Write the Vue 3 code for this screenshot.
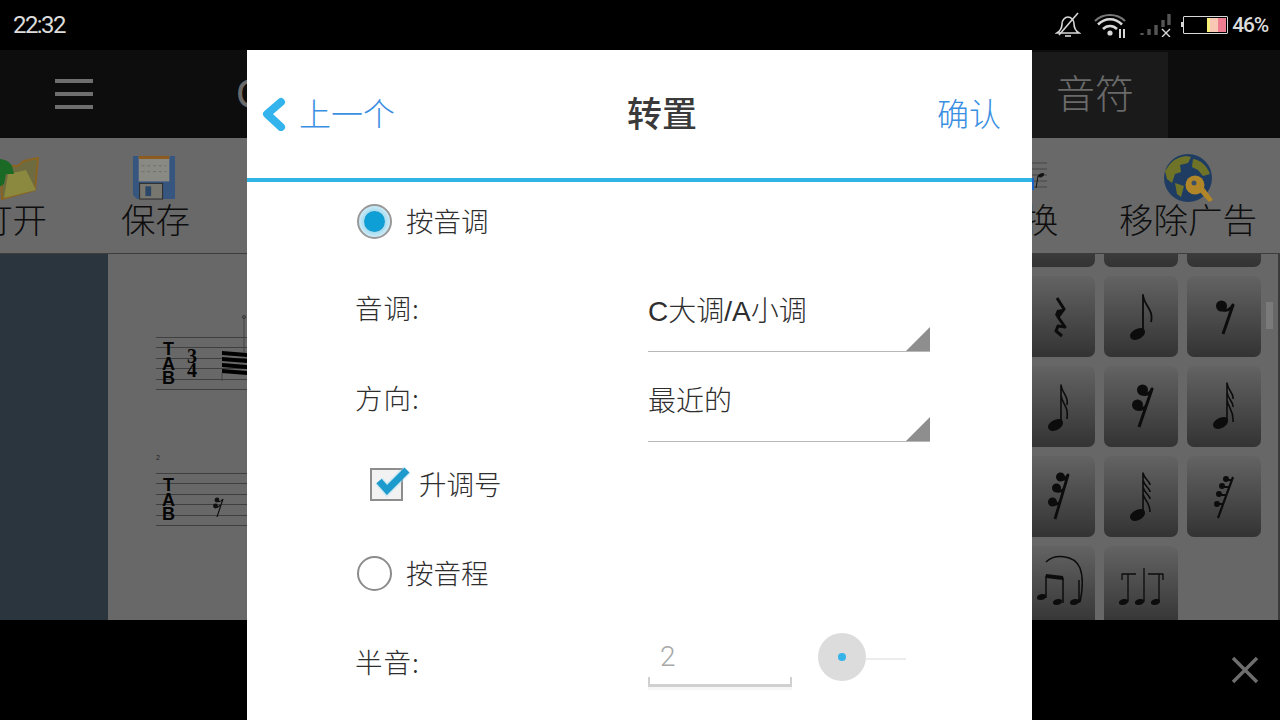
<script setup>
// note shapes for the palette, drawn in a 74x81 button box
const palette = [
  { id: 'r4', weight: 3, stroke: 'M36 22l7 11-6 8 7 10-7-1-2 5 6 5', fill: 'M36 34l6-1-5 9-3-3z' },
  { id: 'n8', weight: 1.8, stroke: 'M39 54V19c1 11 11 14 8 27', fill: 'M26 60c0-4 6-8 11-8 3 0 4 2 4 4 0 4-6 8-10 8-3 0-5-2-5-4z' },
  { id: 'r8', weight: 3, stroke: 'M36 34c4 1 8-1 10-5L36 58', fill: 'M29 30a5.5 5.5 0 1 0 11 0a5.5 5.5 0 1 0-11 0z' },
  { id: 'n16', weight: 1.6, stroke: 'M40 57V19c1 9 8 11 6 20M40 29c1 9 8 11 6 24', fill: 'M27 61c0-4 6-8 11-8 3 0 4 2 4 4 0 4-6 8-10 8-3 0-5-2-5-4z' },
  { id: 'r16', weight: 3, stroke: 'M38 28c4 1 8 0 10-5L35 61M33 43c4 1 7 0 9-3', fill: 'M33 24a5.5 5.5 0 1 0 11 0a5.5 5.5 0 1 0-11 0zM28 39a5.5 5.5 0 1 0 11 0a5.5 5.5 0 1 0-11 0z' },
  { id: 'n32', weight: 1.6, stroke: 'M40 55V17c1 8 7 10 6 16M40 26c1 8 7 10 6 15M40 34c1 8 7 10 6 22', fill: 'M26 59c0-4 6-8 11-8 3 0 4 2 4 4 0 4-6 8-10 8-3 0-5-2-5-4z' },
  { id: 'r32', weight: 2.8, stroke: 'M39 23c3 1 6 0 8-4L34 63M36 35c3 1 5 0 7-2M32 48c3 1 5 0 7-2', fill: 'M35 21a4.5 4.5 0 1 0 9 0a4.5 4.5 0 1 0-9 0zM31 32a4.5 4.5 0 1 0 9 0a4.5 4.5 0 1 0-9 0zM27 46a4.5 4.5 0 1 0 9 0a4.5 4.5 0 1 0-9 0z' },
  { id: 'n64', weight: 1.6, stroke: 'M39 57V17c1 6 7 8 7 12M39 24c1 6 7 8 7 12M39 31c1 6 7 8 7 12M39 38c1 6 7 8 7 18', fill: 'M26 61c0-4 6-8 11-8 3 0 4 2 4 4 0 4-6 8-10 8-3 0-5-2-5-4z' },
  { id: 'r64', weight: 2.2, stroke: 'M46 21L31 62M38 24h7M35 31h7M32 39h7M30 48h7', fill: 'M36 23a3 3 0 1 0 6 0a3 3 0 1 0-6 0zM32 30a3 3 0 1 0 6 0a3 3 0 1 0-6 0zM29 38a3 3 0 1 0 6 0a3 3 0 1 0-6 0zM27 48a3 3 0 1 0 6 0a3 3 0 1 0-6 0z' },
  { id: 'tuplet', weight: 1.5, stroke: 'M25 52V30l17 2v25M58 57V34M25 16c8-8 28-8 34 6 3 8 3 20 0 34', fill: 'M16 52c0-3 3-4 6-4 2 0 3 1 3 2 0 3-3 4-6 4-2 0-3-1-3-2zM32 57c0-3 3-4 6-4 2 0 3 1 3 2 0 3-3 4-6 4-2 0-3-1-3-2zM49 57c0-3 3-4 6-4 2 0 3 1 3 2 0 3-3 4-6 4-2 0-3-1-3-2zM25 28l17 2v4l-17-2z' },
  { id: 'tuplet2', weight: 1.3, stroke: 'M24 56V28M40 56V28M55 56V28M18 34v-6h14M44 28h15v6M40 22v8', fill: 'M15 57c0-3 3-4 6-4 2 0 3 1 3 2 0 3-3 4-6 4-2 0-3-1-3-2zM31 57c0-3 3-4 6-4 2 0 3 1 3 2 0 3-3 4-6 4-2 0-3-1-3-2zM47 57c0-3 3-4 6-4 2 0 3 1 3 2 0 3-3 4-6 4-2 0-3-1-3-2z' },
]
</script>

<template>
  <div class="screen">
    <div class="status-bar">
      <span class="clock">22:32</span>
      <div class="status-icons">
        <svg class="ic-bell" width="26" height="26" viewBox="0 0 26 26" fill="none" stroke="#d8d8d8" stroke-width="1.6">
          <path d="M2 21c3-2 5-4 5-9 0-4 3-7 6-7s6 3 6 7c0 5 2 7 5 9z" />
          <path d="M10 24h6" />
          <path d="M4 23L23 1" />
        </svg>
        <svg class="ic-wifi" width="33" height="26" viewBox="0 0 33 26" fill="none" stroke="#d8d8d8">
          <path d="M1 9c8-8 22-8 30 0" stroke-width="2.2" stroke="#777" />
          <path d="M4 12.5c7-7 17-7 24 0" stroke-width="2.6" />
          <path d="M9 17c4-4 10-4 14 0" stroke-width="2.6" />
          <circle cx="16" cy="21" r="2.6" fill="#d8d8d8" stroke="none" />
          <path d="M26 17v9M30 17v9" stroke-width="2" />
        </svg>
        <svg class="ic-signal" width="32" height="24" viewBox="0 0 32 24" stroke="#555" stroke-width="3.4">
          <path d="M3 22v-2M10 22v-6M17 22v-10M24 14V7M30 12V1" />
          <path d="M23 16l8 8M31 16l-8 8" stroke="#d8d8d8" stroke-width="1.4" />
        </svg>
        <div class="battery">
          <span class="battery-fill yellow"></span>
          <span class="battery-fill peach"></span>
          <span class="battery-fill pink"></span>
        </div>
        <span class="percent">46%</span>
      </div>
    </div>

    <div class="app-bar">
      <div class="menu-btn">
        <span></span><span></span><span></span>
      </div>
      <span class="app-title">C</span>
      <div class="app-tab">音符</div>
    </div>

    <div class="toolbar">
      <div class="tool">
        <svg width="46" height="46" viewBox="0 0 46 46">
          <path d="M10 12H28L34 7 48 4 45 36 12 45z" fill="#6e6b40" stroke="#8a6420" stroke-width="2" />
          <path d="M18 20L36 16 46 36 14 44z" fill="#8b8840" />
          <path d="M-2 10C4 2 18 4 22 12L24 20H16L14 30 4 36-2 30z" fill="#1a6a25" />
        </svg>
        <span>打开</span>
      </div>
      <div class="tool">
        <svg class="floppy" width="44" height="45" viewBox="0 0 46 46" preserveAspectRatio="none">
          <path d="M1 1h44v44H5l-4-4z" fill="#37567f" />
          <rect x="7" y="1" width="32" height="26" fill="#8a8a84" />
          <rect x="7" y="1" width="32" height="3" fill="#8f5a1e" />
          <path d="M10 11h26M10 17h26" stroke="#6e6e6a" stroke-dasharray="3 3" />
          <rect x="8" y="29" width="24" height="16" fill="#77776f" stroke="#2a2a2a" />
          <rect x="14" y="32" width="6" height="10" fill="#2b4768" />
        </svg>
        <span>保存</span>
      </div>
      <div class="tool tool-wide">
        <svg width="46" height="46" viewBox="0 0 46 46" stroke="#474747" fill="none">
          <path d="M28 9h18M28 15h18M28 21h18M28 27h18M28 33h18" />
          <path d="M37 22c1-2 5-3 6-2-1 3-4 4-6 2zM37 22l-2 12" fill="#111" stroke="#111" />
          <path d="M31 24v12" stroke="#1a5fc0" stroke-width="4" />
        </svg>
        <span>转换</span>
      </div>
      <div class="tool tool-last">
        <svg class="globe" width="50" height="50" viewBox="0 0 50 50">
          <circle cx="25" cy="24" r="24" fill="#1f3d63" />
          <path d="M7 10c6-7 16-9 21-7l-3 6-8 2 1 7-6 2-3 9-5-4-2-8zM30 5c8 1 14 7 17 15l-7 2-5-6-6-3zM12 29l9 3-3 11-4-3z" fill="#6f7328" />
          <path d="M35 36l11 12 4-2-11-15z" fill="#b08628" />
          <circle cx="32" cy="31" r="9.5" fill="#b08628" />
          <circle cx="31" cy="29" r="2.5" fill="#3d4f66" />
        </svg>
        <span>移除广告</span>
      </div>
    </div>

    <div class="workspace">
      <div class="side-strip"></div>
      <div class="score">
        <div class="staff first">
          <span class="tab-mark">T<br />A<br />B</span>
          <span class="time-sig">3<br />4</span>
          <svg class="beams" width="27" height="66" viewBox="0 0 27 66">
            <path d="M2 34l25 2v4l-25-2zM2 40l25 2v4l-25-2zM2 46l25 2v4l-25-2zM2 52l25 2v4l-25-2z" fill="#000" />
            <path d="M24 0v36M2 56v8" stroke="#444" />
            <circle cx="24" cy="0" r="1.5" fill="none" stroke="#333" />
          </svg>
        </div>
        <span class="bar-no">2</span>
        <div class="staff">
          <span class="tab-mark">T<br />A<br />B</span>
          <svg class="rest" width="11" height="20" viewBox="0 0 11 20" fill="none" stroke="#111" stroke-width="1.2">
            <path d="M4 4c2 1 4 1 6-2L4 20M2 10c2 1 4 0 5-2" />
            <circle cx="4" cy="3" r="1.8" fill="#111" />
            <circle cx="2.5" cy="9" r="1.8" fill="#111" />
          </svg>
        </div>
      </div>
      <div class="palette-wrap">
        <div class="palette">
          <div class="note-btn"></div>
          <div class="note-btn"></div>
          <div class="note-btn"></div>
          <div v-for="item in palette" :key="item.id" class="note-btn">
            <svg width="74" height="81" viewBox="0 0 74 81">
              <path :d="item.stroke" fill="none" stroke="#0c0c0c" :stroke-width="item.weight" stroke-linejoin="round" />
              <path v-if="item.fill" :d="item.fill" fill="#0c0c0c" />
            </svg>
          </div>
        </div>
        <div class="scroll-thumb"></div>
      </div>
    </div>

    <div class="ad-bar">
      <svg width="28" height="28" viewBox="0 0 28 28" stroke="#6e6e6e" stroke-width="3.4">
        <path d="M2 2l24 24M26 2L2 26" />
      </svg>
    </div>

    <div class="dialog">
      <div class="dialog-head">
        <div class="back">
          <svg width="24" height="34" viewBox="0 0 24 34" fill="none" stroke="#34b4ec" stroke-width="8" stroke-linecap="round" stroke-linejoin="round">
            <path d="M19 5L5 17l14 13" />
          </svg>
          <span>上一个</span>
        </div>
        <div class="head-title">转置</div>
        <div class="confirm">确认</div>
      </div>

      <div class="form">
        <div class="radio-row first-radio">
          <span class="radio on"><i></i></span>
          <span class="radio-text">按音调</span>
        </div>
        <div class="field-row">
          <span class="field-label">音调:</span>
          <div class="select"><span>C大调/A小调</span></div>
        </div>
        <div class="field-row">
          <span class="field-label">方向:</span>
          <div class="select"><span>最近的</span></div>
        </div>
        <div class="check-row">
          <svg class="check" width="38" height="38" viewBox="0 0 38 38" fill="none">
            <rect x="1" y="6" width="31" height="31" fill="#f2f2f2" stroke="#8d8d8d" stroke-width="2" />
            <path d="M9 18l8 9L37 7" stroke="#9adcf2" stroke-width="10" stroke-opacity=".4" />
            <path d="M9 18l8 9L37 7" stroke="#1c9bcc" stroke-width="7" />
          </svg>
          <span>升调号</span>
        </div>
        <div class="radio-row second-radio">
          <span class="radio"></span>
          <span class="radio-text">按音程</span>
        </div>
        <div class="semitone-row">
          <span class="field-label">半音:</span>
          <div class="num-input">2</div>
          <div class="slider">
            <span class="knob"><i></i></span>
            <span class="track"></span>
          </div>
        </div>
      </div>
    </div>
  </div>
</template>

<style>
html, body {
  margin: 0;
  background: #000;
}
</style>

<style scoped>
.screen {
  position: relative;
  display: flex;
  flex-direction: column;
  width: 1280px;
  height: 720px;
  overflow: hidden;
  background: #000;
  font-family: "Noto Sans CJK SC", "Noto Sans", sans-serif;
}

/* status bar */
.status-bar {
  display: flex;
  align-items: center;
  justify-content: space-between;
  flex: 0 0 50px;
  padding: 0 12px 0 13px;
  background: #000;
  color: #dcdcdc;
}

.clock {
  font-family: Roboto, sans-serif;
  font-size: 24px;
  letter-spacing: -1.6px;
}

.status-icons {
  display: flex;
  align-items: center;
}

.ic-wifi {
  margin-left: 13px;
}

.ic-signal {
  margin-left: 12px;
}

.battery {
  position: relative;
  display: flex;
  justify-content: flex-end;
  box-sizing: border-box;
  width: 45px;
  height: 18px;
  margin-left: 12px;
  padding: 1px;
  border: 1px solid #d8d8d8;
  border-radius: 1px;
}

.battery::before {
  content: "";
  position: absolute;
  left: -3px;
  top: 5px;
  width: 2px;
  height: 5px;
  background: #d8d8d8;
}

.battery-fill {
  display: block;
  height: 100%;
}

.yellow { width: 3px; background: #f8f07a; }
.peach { width: 8px; background: #f8c8b4; }
.pink { width: 8px; background: #ee7d92; }

.percent {
  margin-left: 4px;
  font-family: Roboto, sans-serif;
  font-size: 21px;
  font-weight: 500;
  letter-spacing: -1.2px;
}

/* app bar */
.app-bar {
  display: flex;
  align-items: stretch;
  flex: 0 0 88px;
  background: #0d0d0d;
  color: #6a6a6a;
}

.menu-btn {
  display: flex;
  flex-direction: column;
  justify-content: center;
  gap: 9px;
  width: 38px;
  margin-left: 55px;
}

.menu-btn span {
  display: block;
  height: 4px;
  background: #6e6e6e;
}

.app-title {
  margin-left: 143px;
  font-family: "Liberation Sans", sans-serif;
  font-size: 42px;
  line-height: 88px;
}

.app-tab {
  margin-left: auto;
  margin-right: 112px;
  margin-top: 2px;
  width: 138px;
  background: #1a1a1a;
  font-size: 39px;
  font-weight: 300;
  line-height: 78px;
  box-sizing: border-box;
  padding-left: 26px;
  text-align: left;
}

/* toolbar */
.toolbar {
  display: flex;
  flex: 0 0 115px;
  margin-left: -59px;
  background: #696969;
  color: #0e0e0e;
}

.tool {
  display: flex;
  flex-direction: column;
  align-items: center;
  flex: 0 0 143px;
  padding-top: 16px;
  font-size: 34.5px;
  font-weight: 300;
  line-height: 36px;
}

.tool svg {
  flex: none;
  overflow: visible;
}

.tool svg.floppy {
  margin-top: 1px;
  margin-right: 4px;
}

.tool svg.globe {
  margin-bottom: -4px;
}

.tool-wide {
  flex-basis: 122px;
  margin-left: auto;
}

.tool-last {
  flex-basis: 176px;
  margin-left: 15px;
  margin-right: 4px;
}

/* workspace */
.workspace {
  display: flex;
  flex: 0 0 367px;
  overflow: hidden;
  border-top: 1px solid #3d3d3d;
  box-sizing: border-box;
}

.side-strip {
  flex: 0 0 108px;
  background: #2b353e;
}

.score {
  display: flex;
  flex-direction: column;
  flex: 1;
  padding: 83px 0 0 48px;
  background: #686868;
}

.staff {
  position: relative;
  display: flex;
  align-items: flex-start;
  height: 53px;
  background: repeating-linear-gradient(to bottom, #3f3f3f 0, #3f3f3f 1px, transparent 1px, transparent 10.4px);
}

.tab-mark {
  margin: 5px 0 0 6px;
  width: 13px;
  font-family: "Liberation Sans", sans-serif;
  font-size: 18px;
  font-weight: 700;
  line-height: 14.5px;
  text-align: center;
  color: #050505;
}

.time-sig {
  margin: 12px 0 0 12px;
  font-family: "Liberation Serif", serif;
  font-size: 20px;
  font-weight: 700;
  line-height: 14px;
  color: #050505;
}

.beams {
  position: absolute;
  left: 64px;
  top: -20px;
  overflow: visible;
}

.rest {
  margin: 24px 0 0 38px;
}

.bar-no {
  margin-top: 64px;
  height: 19px;
  font-family: "Liberation Sans", sans-serif;
  font-size: 7px;
  line-height: 8px;
  color: #222;
}

.palette-wrap {
  display: flex;
  flex: 0 0 259px;
  box-sizing: border-box;
  background: #676767;
  border-right: 2px solid #3a3a3a;
}

.palette {
  display: grid;
  grid-template-columns: repeat(3, 74px);
  grid-auto-rows: 81px;
  gap: 9px;
  margin-top: -68px;
}

.note-btn {
  border-radius: 7px;
  background: linear-gradient(to bottom, #636363, #333);
}

.note-btn svg {
  display: block;
  filter: blur(0.5px);
}

.scroll-thumb {
  width: 7px;
  height: 27px;
  margin: 48px 0 0 5px;
  background: #7a7a7a;
}

.ad-bar {
  display: flex;
  align-items: center;
  justify-content: flex-end;
  flex: 0 0 100px;
  padding: 0 21px 0 0;
  background: #000;
}

/* dialog */
.dialog {
  position: absolute;
  left: 247px;
  top: 50px;
  width: 785px;
  height: 670px;
  background: #fff;
  color: #2e2e2e;
}

.dialog-head {
  display: grid;
  grid-template-columns: 1fr auto 1fr;
  align-items: center;
  box-sizing: border-box;
  height: 132px;
  padding: 0 31px 5px 15px;
  border-bottom: 4px solid #30b4e8;
  font-size: 32px;
  font-weight: 300;
}

.back {
  display: flex;
  align-items: center;
  gap: 13px;
  color: #3a8fe2;
}

.back svg {
  margin-top: 4px;
}

.head-title {
  margin-left: 61px;
  font-size: 35px;
  font-weight: 500;
  color: #3a3a3a;
}

.confirm {
  text-align: right;
  color: #3a8fe2;
}

.form {
  display: flex;
  flex-direction: column;
  padding-left: 108px;
  font-size: 27.5px;
  font-weight: 300;
}

.radio-row {
  display: flex;
  align-items: center;
  gap: 14px;
  padding-left: 2px;
}

.first-radio {
  height: 78px;
  padding-bottom: 2px;
}

.second-radio { height: 98px; }

.radio-text {
  margin-top: -2px;
}

.radio {
  display: flex;
  align-items: center;
  justify-content: center;
  box-sizing: border-box;
  width: 35px;
  height: 35px;
  border: 2px solid #8c8c8c;
  border-radius: 50%;
}

.radio.on {
  border-color: #999;
  background: radial-gradient(circle, #a9ddf1 50%, #e6f5fb 85%);
}

.radio i {
  display: block;
  width: 21px;
  height: 21px;
  border-radius: 50%;
  background: radial-gradient(circle, #0d9fd6 60%, #3f86a5);
}

.field-row {
  display: grid;
  grid-template-columns: 293px 282px;
  height: 90px;
  align-items: center;
}

.field-label {
  letter-spacing: 1px;
}

.select {
  position: relative;
  display: flex;
  align-items: center;
  box-sizing: border-box;
  height: 90px;
  padding-top: 5px;
  border-bottom: 1px solid #b8b8b8;
  font-family: "Liberation Sans", "Noto Sans CJK SC", sans-serif;
  font-size: 28px;
}

.select::after {
  content: "";
  position: absolute;
  right: 0;
  bottom: 0;
  border-style: solid;
  border-width: 0 0 24px 24px;
  border-color: transparent transparent #8e8e8e transparent;
}

.check-row {
  display: flex;
  align-items: center;
  gap: 11px;
  height: 82px;
  padding-left: 15px;
}

.check {
  flex: none;
  margin-top: -3px;
  overflow: visible;
}

.semitone-row {
  display: grid;
  grid-template-columns: 293px 144px 138px;
  height: 96px;
  align-items: start;
}

.semitone-row .field-label {
  margin-top: 19px;
}

.num-input {
  position: relative;
  box-sizing: border-box;
  height: 65px;
  padding: 19px 0 0 12px;
  border-bottom: 3px solid #d0d0d0;
  box-shadow: 0 3px 0 #f6f6f6;
  font-family: Roboto, sans-serif;
  font-size: 28px;
  line-height: 32px;
  font-weight: 300;
  color: #a8a8a8;
}

.num-input::after {
  content: "";
  position: absolute;
  left: 0;
  right: 0;
  bottom: 0;
  height: 7px;
  border-left: 2px solid #d0d0d0;
  border-right: 2px solid #d0d0d0;
}

.slider {
  display: flex;
  align-items: center;
  margin: 11px 0 0 26px;
  height: 48px;
}

.knob {
  display: flex;
  align-items: center;
  justify-content: center;
  flex: none;
  width: 48px;
  height: 48px;
  border-radius: 50%;
  background: #dcdcdc;
}

.knob i {
  display: block;
  width: 8px;
  height: 8px;
  border-radius: 50%;
  background: #35b4ea;
}

.track {
  flex: none;
  width: 40px;
  height: 2px;
  margin-top: 4px;
  background: #ececec;
}
</style>
